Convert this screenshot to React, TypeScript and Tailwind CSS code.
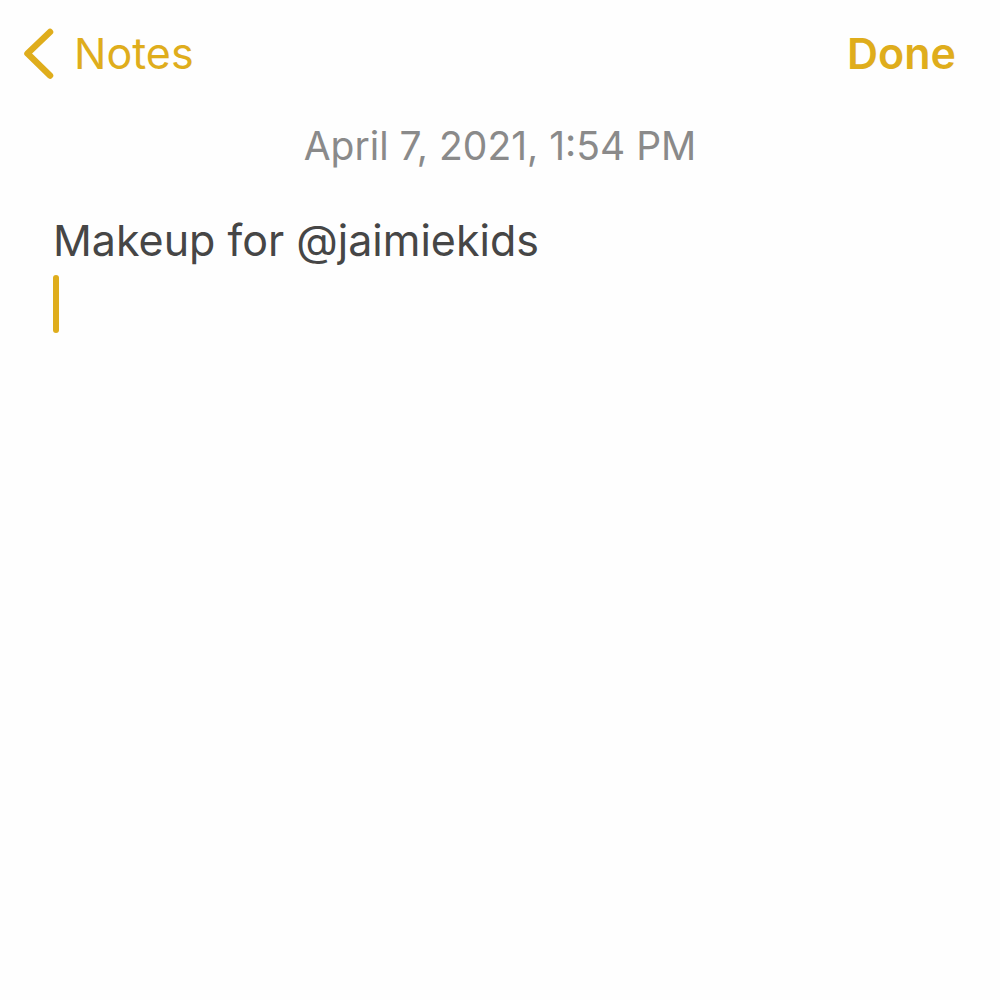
import { useState } from "react";

const NotesHeader = () => {
  return (
    <header className="flex h-[106px] items-center justify-between pl-6 pr-11 text-[#dfad1c]">
      <button type="button" className="flex items-center gap-5">
        <svg
          viewBox="0 0 30 52"
          className="h-13 w-[30px] shrink-0"
          fill="none"
          stroke="currentColor"
          strokeWidth="6.500"
          strokeLinecap="round"
          strokeLinejoin="round"
          aria-hidden="true"
        >
          <path d="M26 5 3.500 26.500 26 48.500" />
        </svg>
        <span className="text-[43px] leading-13">Notes</span>
      </button>
      <button type="button" className="text-[43px] leading-13 font-semibold">
        Done
      </button>
    </header>
  );
};

const App = () => {
  const [title, setTitle] = useState("Makeup for @jaimiekids");

  return (
    <div className="min-h-screen bg-[#fefefe] font-['Inter',sans-serif]">
      <NotesHeader />
      <main>
        <time
          dateTime="2021-04-07T13:54"
          className="mt-3.5 block text-center text-[39px] leading-13 text-[#8a8a8a]"
        >
          April 7, 2021, 1:54 PM
        </time>
        <div className="mt-[38px] px-[53px]">
          <input
            type="text"
            aria-label="Note"
            value={title}
            onChange={(e) => setTitle(e.target.value)}
            className="block h-15 w-full bg-transparent text-[43px] leading-15 text-[#464646] outline-none"
          />
          <div className="mt-[5px] h-[58px] w-[6px] rounded-full bg-[#dfad1c]" />
        </div>
      </main>
    </div>
  );
};

export default App;
